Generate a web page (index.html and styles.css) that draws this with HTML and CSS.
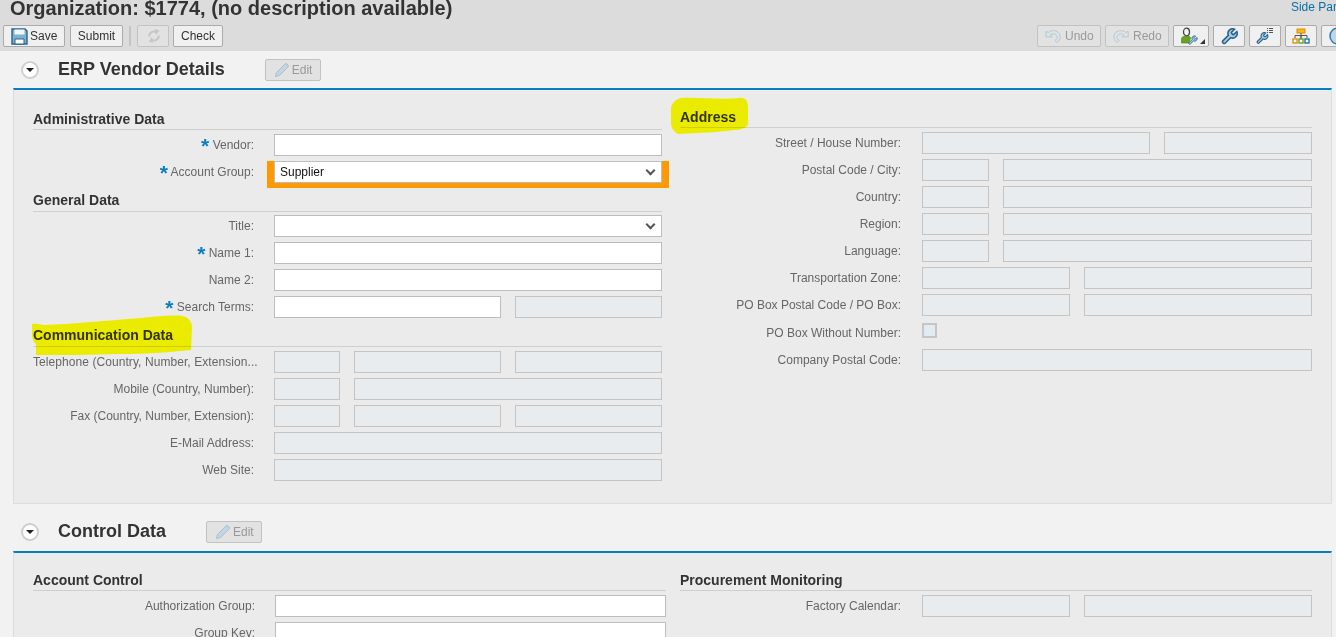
FILE: index.html
```html
<!DOCTYPE html>
<html lang="en">
<head>
    <meta charset="UTF-8">
    <meta name="viewport" content="width=device-width, initial-scale=1.0">
    <title>Organization: $1774</title>
    <link rel="stylesheet" href="styles.css">
</head>
<body>
    <div class="page-header">
        <div class="title-row">
            <h1 class="page-title">Organization: $1774, (no description available)</h1>
            <a class="side-link">Side Panel</a>
        </div>
        <div class="toolbar">
            <button class="btn btn-save">
                <svg class="icon" width="17" height="17" viewBox="0 0 17 17"><path d="M1 1h13l2 2v13H1z" fill="#7fb0d0" stroke="#26648f" stroke-width="1.400"/><path d="M3.500 1.500h10v5h-10z" fill="#f4f4f4"/><path d="M4 11h9v5H4z" fill="#fff" stroke="#26648f"/></svg>
                Save
            </button>
            <button class="btn btn-submit">Submit</button>
            <span class="tool-sep"></span>
            <button class="btn btn-off btn-refresh">
                <svg width="14" height="16" viewBox="0 0 14 16"><path d="M2.200 8.500A4.800 4.800 0 0 1 9.500 4.300M11.800 7.500A4.800 4.800 0 0 1 4.500 11.700" fill="none" stroke="#c6c6c6" stroke-width="2"/><path d="M8 1l4.500 1.500L9 7zM6 15l-4.500-1.500L5 9z" fill="#c6c6c6"/></svg>
            </button>
            <button class="btn">Check</button>
            <div class="toolbar-right">
                <button class="btn btn-off btn-history">
                    <svg class="icon" width="17" height="16" viewBox="0 0 19 16"><path class="arrow-path" d="M1 3v6h7L5.800 6.800C8 5 12 5 13.500 8.500c.5 1.500-.5 3.500-2.500 4.500l2 2c4-1.500 5-6 3-9.500C13.500 1.500 7.500.8 4 4z"/></svg>
                    Undo
                </button>
                <button class="btn btn-off btn-history">
                    <svg class="icon" width="17" height="16" viewBox="0 0 19 16"><path class="arrow-path" transform="matrix(-1 0 0 1 18 0)" d="M1 3v6h7L5.800 6.800C8 5 12 5 13.500 8.500c.5 1.500-.5 3.500-2.500 4.500l2 2c4-1.500 5-6 3-9.500C13.500 1.500 7.500.8 4 4z"/></svg>
                    Redo
                </button>
                <button class="btn btn-icon btn-user">
                    <svg width="18" height="18" viewBox="0 0 18 18"><ellipse cx="5.500" cy="5" rx="3" ry="3.800" fill="#f4f4f4" stroke="#444" stroke-width="1.300"/><path d="M.5 16v-4c0-1.500 1-2.500 2.500-2.500h5c.8 0 1.500.5 1.500 1.500L8 16z" fill="#6aa31f" stroke="#4c7a14" stroke-width=".6"/><path class="wrench" transform="translate(6.500 8) scale(.44)" d="M14.700 6.300a1 1 0 0 0 0 1.400l1.600 1.600a1 1 0 0 0 1.400 0l3.770-3.770a6 6 0 0 1-7.940 7.940l-6.910 6.910a2.120 2.120 0 0 1-3-3l6.910-6.910a6 6 0 0 1 7.940-7.940l-3.760 3.760z"/></svg>
                    <span class="corner-mark"></span>
                </button>
                <button class="btn btn-icon">
                    <svg width="17" height="17" viewBox="1 1 22 22"><path class="wrench" d="M14.700 6.300a1 1 0 0 0 0 1.400l1.600 1.600a1 1 0 0 0 1.400 0l3.770-3.770a6 6 0 0 1-7.940 7.940l-6.910 6.910a2.120 2.120 0 0 1-3-3l6.910-6.910a6 6 0 0 1 7.940-7.940l-3.760 3.760z"/></svg>
                </button>
                <button class="btn btn-icon">
                    <svg width="18" height="18" viewBox="0 0 18 18"><path class="wrench" transform="translate(-.5 4.500) scale(.56)" d="M14.700 6.300a1 1 0 0 0 0 1.400l1.600 1.600a1 1 0 0 0 1.400 0l3.770-3.770a6 6 0 0 1-7.940 7.940l-6.910 6.910a2.120 2.120 0 0 1-3-3l6.910-6.910a6 6 0 0 1 7.940-7.940l-3.760 3.760z"/><path d="M11 1h1v1h-1zM13 1h4v1h-4zM11 3h1v1h-1zM13 3h4v1h-4zM11 5h1v1h-1zM13 5h4v1h-4z" fill="#555"/></svg>
                </button>
                <button class="btn btn-icon">
                    <svg width="18" height="17" viewBox="0 0 18 17"><rect x="5" y="1" width="8" height="4" fill="#fdb913" stroke="#e08a00"/><path d="M9 5v5M3 10V7.500h12V10M9 7.500V11" fill="none" stroke="#555"/><rect x="1" y="11" width="4" height="4" fill="#fff" stroke="#e08a00" stroke-width="1.300"/><rect x="7" y="11" width="4" height="4" fill="#fff" stroke="#5a9a22" stroke-width="1.300"/><rect x="13" y="11" width="4" height="4" fill="#fff" stroke="#26648f" stroke-width="1.300"/></svg>
                </button>
                <button class="btn btn-icon btn-help">
                    <svg width="18" height="18" viewBox="0 0 18 18"><circle cx="9" cy="9" r="8" fill="#bcd6e8" stroke="#2f7cae" stroke-width="1.500"/></svg>
                </button>
            </div>
        </div>
    </div>

    <section class="section">
        <div class="section-head">
            <span class="toggle"></span>
            <h2 class="section-title">ERP Vendor Details</h2>
            <button class="btn btn-off btn-edit">
                <svg class="icon" width="16" height="16" viewBox="0 0 16 16"><path d="M1.500 14.500l1-4L11 2a1.400 1.400 0 0 1 2 0l1 1a1.400 1.400 0 0 1 0 2l-8.500 8.500z" fill="#c3d6e2" stroke="#a9bfcd"/></svg>
                Edit
            </button>
        </div>
        <div class="panel">
            <div class="col col-left">
                <h3 class="form-head">Administrative Data</h3>
                <div class="row">
                    <label class="label"><span class="req">*</span> Vendor:</label>
                    <div class="fields"><input class="field"></div>
                </div>
                <div class="row">
                    <label class="label"><span class="req">*</span> Account Group:</label>
                    <div class="fields"><div class="select select-marked"><select class="field"><option>Supplier</option></select></div></div>
                </div>
                <h3 class="form-head form-head-up form-head-tight">General Data</h3>
                <div class="row">
                    <label class="label">Title:</label>
                    <div class="fields"><div class="select"><select class="field"><option></option></select></div></div>
                </div>
                <div class="row">
                    <label class="label"><span class="req">*</span> Name 1:</label>
                    <div class="fields"><input class="field"></div>
                </div>
                <div class="row">
                    <label class="label">Name 2:</label>
                    <div class="fields"><input class="field"></div>
                </div>
                <div class="row">
                    <label class="label"><span class="req">*</span> Search Terms:</label>
                    <div class="fields"><input class="field w-227"><input class="field" disabled></div>
                </div>
                <h3 class="form-head form-head-up">Communication Data
                    <svg class="marker marker-comm" width="162" height="40" viewBox="0 0 162 40"><path d="M2 9C8 8 12 10 15 10 40 9 72 6 112 3 130 1 146 0 152 1 158 2 162 6 162 12L161 35C140 37 122 39 90 39 60 40 30 40 6 40L6 29C3 27 2 22 2 19z"/></svg>
                </h3>
                <div class="row">
                    <label class="label label-long">Telephone (Country, Number, Extension...</label>
                    <div class="fields"><input class="field w-66" disabled><input class="field w-147" disabled><input class="field" disabled></div>
                </div>
                <div class="row">
                    <label class="label">Mobile (Country, Number):</label>
                    <div class="fields"><input class="field w-66" disabled><input class="field" disabled></div>
                </div>
                <div class="row">
                    <label class="label">Fax (Country, Number, Extension):</label>
                    <div class="fields"><input class="field w-66" disabled><input class="field w-147" disabled><input class="field" disabled></div>
                </div>
                <div class="row">
                    <label class="label">E-Mail Address:</label>
                    <div class="fields"><input class="field" disabled></div>
                </div>
                <div class="row">
                    <label class="label">Web Site:</label>
                    <div class="fields"><input class="field" disabled></div>
                </div>
            </div>
            <div class="col col-right">
                <h3 class="form-head">Address
                    <svg class="marker marker-addr" width="80" height="38" viewBox="0 0 80 38"><path d="M1 10C3 5 6 2 11 1 30 0 50 3 70 1 75 0 78 4 78 10L78 27C77 31 70 33 64 33 50 35 30 36 8 37 3 34 1 30 1 26z"/></svg>
                </h3>
                <div class="row">
                    <label class="label">Street / House Number:</label>
                    <div class="fields"><input class="field w-228" disabled><input class="field" disabled></div>
                </div>
                <div class="row">
                    <label class="label">Postal Code / City:</label>
                    <div class="fields"><input class="field w-67" disabled><input class="field" disabled></div>
                </div>
                <div class="row">
                    <label class="label">Country:</label>
                    <div class="fields"><input class="field w-67" disabled><input class="field" disabled></div>
                </div>
                <div class="row">
                    <label class="label">Region:</label>
                    <div class="fields"><input class="field w-67" disabled><input class="field" disabled></div>
                </div>
                <div class="row">
                    <label class="label">Language:</label>
                    <div class="fields"><input class="field w-67" disabled><input class="field" disabled></div>
                </div>
                <div class="row">
                    <label class="label">Transportation Zone:</label>
                    <div class="fields"><input class="field w-148" disabled><input class="field" disabled></div>
                </div>
                <div class="row">
                    <label class="label">PO Box Postal Code / PO Box:</label>
                    <div class="fields"><input class="field w-148" disabled><input class="field" disabled></div>
                </div>
                <div class="row row-check">
                    <label class="label">PO Box Without Number:</label>
                    <div class="fields"><span class="check"></span></div>
                </div>
                <div class="row">
                    <label class="label">Company Postal Code:</label>
                    <div class="fields"><input class="field" disabled></div>
                </div>
            </div>
        </div>
    </section>

    <section class="section section-next">
        <div class="section-head">
            <span class="toggle"></span>
            <h2 class="section-title">Control Data</h2>
            <button class="btn btn-off btn-edit">
                <svg class="icon" width="16" height="16" viewBox="0 0 16 16"><path d="M1.500 14.500l1-4L11 2a1.400 1.400 0 0 1 2 0l1 1a1.400 1.400 0 0 1 0 2l-8.500 8.500z" fill="#c3d6e2" stroke="#a9bfcd"/></svg>
                Edit
            </button>
        </div>
        <div class="panel panel-next">
            <div class="col col-left">
                <h3 class="form-head">Account Control</h3>
                <div class="row">
                    <label class="label">Authorization Group:</label>
                    <div class="fields"><input class="field"></div>
                </div>
                <div class="row">
                    <label class="label">Group Key:</label>
                    <div class="fields"><input class="field"></div>
                </div>
            </div>
            <div class="col col-right">
                <h3 class="form-head">Procurement Monitoring</h3>
                <div class="row">
                    <label class="label">Factory Calendar:</label>
                    <div class="fields"><input class="field w-148" disabled><input class="field" disabled></div>
                </div>
            </div>
        </div>
    </section>
</body>
</html>
```

FILE: styles.css
```css
* { box-sizing: border-box; margin: 0; padding: 0; }
html, body { height: 637px; overflow: hidden; }
body {
    font-family: "Liberation Sans", Arial, sans-serif;
    font-size: 12px;
    color: #333;
    background-color: #f2f2f2;
}

/* header + toolbar */
.page-header {
    width: 1360px;
    height: 51px;
    padding: 0 7px 0 3px;
    background-color: #dcdcdc;
}
.title-row {
    display: flex;
    justify-content: space-between;
    height: 25px;
    padding: 0 4px 0 7px;
}
.page-title {
    margin-top: -4px;
    font-size: 20px;
    line-height: 24px;
    font-weight: bold;
    color: #333;
}
.side-link {
    font-size: 12px;
    line-height: 15px;
    color: #0a6ea8;
}
.toolbar {
    display: flex;
    align-items: center;
    gap: 4px;
    height: 22px;
}
.toolbar-right {
    display: flex;
    gap: 4px;
    margin-left: auto;
}
.tool-sep {
    width: 2px;
    height: 20px;
    margin: 0 2px;
    background-color: #c4c4c4;
}

/* buttons */
.btn {
    display: inline-flex;
    align-items: center;
    justify-content: center;
    height: 22px;
    padding: 0 7px;
    font-family: inherit;
    font-size: 12px;
    color: #333;
    background-color: #f0f0f0;
    border: 1px solid #ababab;
    border-radius: 2px;
}
.btn .icon { margin-right: 3px; }
.btn-save {
    justify-content: flex-start;
    width: 62px;
    margin-right: 1px;
    padding: 0 0 0 7px;
}
.btn-save .icon { margin-right: 2px; }
.btn-submit { width: 53px; padding: 0; }
.btn-off {
    color: #999;
    background-color: #e2e2e2;
    border-color: #c2c2c2;
}
.btn-refresh { width: 32px; padding: 0 0 0 2px; }
.btn-history { justify-content: flex-start; width: 64px; padding: 0 0 0 7px; }
.btn-icon { width: 32px; padding: 0; }
.btn-user { position: relative; width: 36px; justify-content: flex-start; padding-left: 7px; }
.corner-mark {
    position: absolute;
    right: 3px;
    bottom: 2px;
    border-style: solid;
    border-width: 0 0 5px 5px;
    border-color: transparent transparent #333 transparent;
}
.btn-help { justify-content: flex-start; padding-left: 7px; }
.arrow-path { fill: #dbe4ea; stroke: #b3c3ce; stroke-width: 1; }
.wrench { fill: #a9cbe0; stroke: #26648f; stroke-width: 2; }

/* sections */
.section-head {
    display: flex;
    align-items: center;
    height: 37px;
    padding-left: 21px;
}
.section-next { margin-top: 9px; }
.section-next .section-head { height: 38px; padding-bottom: 1px; }
.toggle {
    position: relative;
    width: 18px;
    height: 18px;
    margin-right: 19px;
    background-color: #fff;
    border: 2px solid #cfcfcf;
    border-radius: 50%;
}
.toggle::after {
    content: "";
    position: absolute;
    left: 3px;
    top: 5px;
    border-style: solid;
    border-width: 4px 4px 0 4px;
    border-color: #222 transparent transparent transparent;
}
.section-title {
    font-size: 18px;
    font-weight: bold;
    color: #333;
}
.btn-edit {
    justify-content: flex-start;
    width: 56px;
    margin-left: 40px;
    padding: 0 0 0 8px;
}
.btn-edit .icon { margin-right: 2px; }
.panel {
    display: flex;
    height: 416px;
    margin: 0 4px 0 13px;
    padding: 14px 0 0 19px;
    background-color: #ebebeb;
    border: 1px solid #ddd;
    border-top: 2px solid #0a7cc1;
}
.panel-next { height: 200px; }
.col { flex: none; }
.col-left { width: 629px; margin-right: 18px; padding-top: 2px; }
.col-right { width: 632px; }
.panel-next .col-left { width: 633px; margin-right: 14px; padding-top: 0; }

/* form */
.form-head {
    position: relative;
    height: 24px;
    margin-bottom: 4px;
    font-size: 14px;
    line-height: 26px;
    font-weight: bold;
    color: #333;
    border-bottom: 1px solid #cfcfcf;
}
.form-head-up { line-height: 24px; }
.form-head-tight { margin-bottom: 3px; }
.marker {
    position: absolute;
    mix-blend-mode: multiply;
    fill: #ffff00;
    pointer-events: none;
}
.marker-comm { left: -3px; top: -8px; }
.marker-addr { left: -10px; top: -7px; }
.row {
    display: flex;
    align-items: center;
    height: 22px;
    margin-bottom: 5px;
}
.row-check { height: 23px; }
.label {
    flex: none;
    width: 221px;
    margin-right: 20px;
    text-align: right;
    white-space: nowrap;
    color: #666;
}
.col-right .label { margin-right: 21px; }
.panel-next .col-left .label { width: 222px; }
.label-long {
    width: 225px;
    margin-right: 16px;
    text-align: left;
    letter-spacing: .07px;
}
.req {
    font-size: 21px;
    font-weight: bold;
    line-height: 0;
    vertical-align: -4px;
    color: #0a7cc1;
}
.fields {
    display: flex;
    flex: 1;
    gap: 14px;
    min-width: 0;
}
.field {
    flex: 1;
    width: 100%;
    min-width: 0;
    height: 22px;
    padding: 0 5px;
    font-family: inherit;
    font-size: 12px;
    color: #111;
    background-color: #fff;
    border: 1px solid #bdbdbd;
    border-radius: 0;
}
.field:disabled { background-color: #e8ecef; border-color: #c4c4c4; }
.w-66 { flex: 0 0 66px; }
.w-67 { flex: 0 0 67px; }
.w-147 { flex: 0 0 147px; }
.w-148 { flex: 0 0 148px; }
.w-227 { flex: 0 0 227px; }
.w-228 { flex: 0 0 228px; }
.select {
    position: relative;
    flex: 1;
    height: 22px;
}
.select select { display: block; appearance: none; }
.select::after {
    content: "";
    position: absolute;
    right: 8px;
    top: 6px;
    width: 5px;
    height: 5px;
    border-right: 2px solid #555;
    border-bottom: 2px solid #555;
    transform: rotate(45deg);
}
.select-marked {
    box-shadow: -7px 0 0 #ff9900, 7px 0 0 #ff9900, 0 5px 0 #ff9900, -7px 5px 0 #ff9900, 7px 5px 0 #ff9900;
}
.check {
    width: 15px;
    height: 15px;
    margin-top: -5px;
    background-color: #e1ebf3;
    border: 2px solid #c6c6c6;
}
```
